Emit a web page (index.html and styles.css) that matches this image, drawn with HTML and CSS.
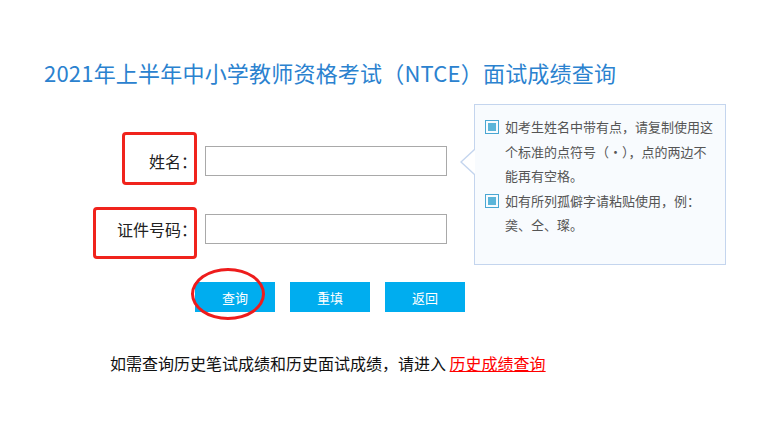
FILE: index.html
```html
<!DOCTYPE html>
<html lang="zh-CN">
<head>
  <meta charset="UTF-8" />
  <meta name="viewport" content="width=device-width, initial-scale=1.0"/>
  <title>面试成绩查询</title>
  <link rel="stylesheet" href="styles.css">
</head>
<body>
  <h1 class="title">2021年上半年中小学教师资格考试（NTCE）面试成绩查询</h1>

  <div class="content">
    <!-- Query form -->
    <div class="form">
      <div class="form-row">
        <label class="label">姓名：<span class="mark mark-name"></span></label>
        <input type="text" class="field" />
      </div>
      <div class="form-row">
        <label class="label">证件号码：<span class="mark mark-id"></span></label>
        <input type="text" class="field" />
      </div>
    </div>

    <!-- Tip box -->
    <div class="tip">
      <div class="tip-item">
        <span class="check"></span>
        <p class="tip-text">如考生姓名中带有点，请复制使用这个标准的点符号（·），点的两边不能再有空格。</p>
      </div>
      <div class="tip-item">
        <span class="check"></span>
        <p class="tip-text">如有所列孤僻字请粘贴使用，例：䶮、仝、璨。</p>
      </div>
    </div>
  </div>

  <div class="buttons">
    <button class="btn">查询<span class="ring"></span></button>
    <button class="btn">重填</button>
    <button class="btn">返回</button>
  </div>

  <p class="note">如需查询历史笔试成绩和历史面试成绩，请进入 <a href="#" class="history-link">历史成绩查询</a></p>
</body>
</html>
```

FILE: styles.css
```css
body {
  font-family: "Microsoft YaHei", "Noto Sans CJK SC", sans-serif;
  background-color: #fff;
  color: #222;
  margin: 0;
  padding: 0;
}

.title {
  font-size: 22px;
  font-weight: normal;
  line-height: 30px;
  color: #2b82cf;
  margin: 0;
  padding: 57px 0 0 44px;
  letter-spacing: 0.2px;
}

.content {
  display: flex;
  align-items: flex-start;
  margin: 17px 0 0 93px;
}

.form {
  display: flex;
  flex-direction: column;
  gap: 38px;
  padding-top: 42px;
}

.form-row {
  display: flex;
  align-items: center;
  gap: 8px;
}

.label {
  position: relative;
  width: 104px;
  font-size: 16px;
  line-height: 30px;
  text-align: right;
  color: #222;
}

/* red annotation boxes */
.mark {
  position: absolute;
  border: 3px solid #f0231c;
  border-radius: 4px;
  box-sizing: border-box;
}

.mark-name {
  top: -14px;
  right: 0;
  width: 75px;
  height: 53px;
}

.mark-id {
  top: -7px;
  left: 0;
  width: 104px;
  height: 52px;
}

.field {
  width: 242px;
  height: 30px;
  box-sizing: border-box;
  border: 1px solid #a9a9a9;
  padding: 0 6px;
  font-size: 14px;
}

.tip {
  position: relative;
  width: 252px;
  height: 161px;
  box-sizing: border-box;
  margin-left: 27px;
  padding: 10px 0 0 10px;
  border: 1px solid #c4d5ee;
  background-color: #f8fbfe;
}

.tip::before,
.tip::after {
  content: "";
  position: absolute;
  top: 44px;
  border-style: solid;
  border-color: transparent;
}

.tip::before {
  left: -15px;
  border-width: 13px 14px 13px 0;
  border-right-color: #c4d5ee;
}

.tip::after {
  left: -13px;
  top: 45px;
  border-width: 12px 13px 12px 0;
  border-right-color: #fff;
}

.tip-item {
  display: flex;
  align-items: flex-start;
  gap: 6px;
}

.check {
  flex: none;
  width: 14px;
  height: 14px;
  box-sizing: border-box;
  margin-top: 5px;
  padding: 2px;
  border: 1px solid #4aa7d3;
  background-color: #5cb5d9;
  background-clip: content-box;
}

.tip-text {
  width: 210px;
  margin: 0;
  font-size: 13px;
  line-height: 24.5px;
  color: #555;
}

.buttons {
  display: flex;
  gap: 15px;
  margin: 17px 0 0 195px;
}

.btn {
  position: relative;
  width: 80px;
  height: 30px;
  border: none;
  background-color: #00adef;
  color: #fff;
  font-family: inherit;
  font-size: 13px;
  cursor: pointer;
}

/* red ellipse annotation */
.ring {
  position: absolute;
  left: -4px;
  top: -14px;
  width: 74px;
  height: 52px;
  box-sizing: border-box;
  border: 3px solid #ee1c1c;
  border-radius: 50%;
}

.note {
  margin: 39px 0 0 110px;
  font-size: 16px;
  line-height: 24px;
  color: #111;
}

.history-link {
  color: #ff0000;
  text-decoration: underline;
}
```
